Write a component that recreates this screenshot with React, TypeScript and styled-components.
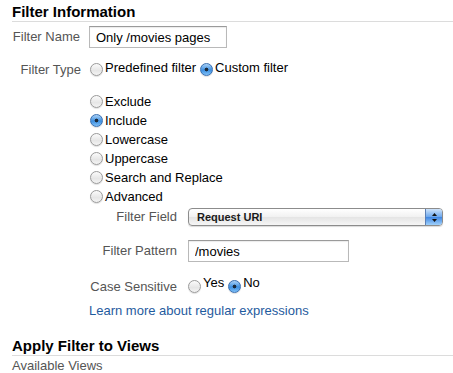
import React from "react";
import styled, { createGlobalStyle } from "styled-components";

const GlobalStyle = createGlobalStyle`
  html, body {
    margin: 0;
    padding: 0;
    background: #ffffff;
  }
  body {
    font-family: "Liberation Sans", Arial, Helvetica, sans-serif;
    font-size: 13px;
    color: #000;
  }
`;

const Page = styled.div`
  padding: 0 0 0 12px;
  width: 441px;
`;

const SectionTitle = styled.h2<{ $top?: number }>`
  margin: ${({ $top }) => $top ?? 0}px 0 0;
  padding-top: 2px;
  font-size: 15px;
  line-height: 19px;
  font-weight: bold;
  color: #000;
  border-bottom: 1px solid #dcdcdc;
`;

const FieldRow = styled.div<{ $top: number; $labelWidth: number; $gap: number }>`
  display: grid;
  grid-template-columns: ${({ $labelWidth }) => $labelWidth}px auto;
  column-gap: ${({ $gap }) => $gap}px;
  align-items: center;
  margin-top: ${({ $top }) => $top}px;
  justify-content: start;
`;

const Label = styled.span`
  text-align: right;
  color: #555;
  font-size: 13px;
  line-height: 16px;
  white-space: nowrap;
`;

const TextInput = styled.input<{ $width: number }>`
  box-sizing: border-box;
  width: ${({ $width }) => $width}px;
  height: 22px;
  padding: 1px 6px 0;
  border: 1px solid #b9b9b9;
  border-top-color: #9a9a9a;
  box-shadow: inset 0 1px 1px rgba(0, 0, 0, 0.08);
  font-family: inherit;
  font-size: 13px;
  color: #000;
  background: #fff;
  outline: none;
`;

const RadioInline = styled.div`
  display: flex;
  align-items: center;
  gap: 4px;
`;

const RadioStack = styled.div<{ $top: number }>`
  display: flex;
  flex-direction: column;
  margin: ${({ $top }) => $top}px 0 0 78px;
`;

const RadioItem = styled.label<{ $lift?: number }>`
  display: inline-flex;
  align-items: center;
  gap: 2px;
  height: 19px;
  font-size: 13px;
  color: #000;
  white-space: nowrap;

  span:last-child {
    position: relative;
    top: ${({ $lift }) => -($lift ?? 0)}px;
  }
`;

const RadioDot = styled.span<{ $checked?: boolean }>`
  box-sizing: border-box;
  display: inline-block;
  width: 13px;
  height: 13px;
  border-radius: 50%;
  flex: none;
  border: 1px solid ${({ $checked }) => ($checked ? "#3a6fb0" : "#9a9a9a")};
  background: ${({ $checked }) =>
    $checked
      ? "radial-gradient(circle at 50% 50%, #1c2a3a 0, #1c2a3a 1.6px, transparent 2.2px), linear-gradient(#a9d1f7, #3d8fe0 55%, #7fc0f8)"
      : "linear-gradient(#fbfbfb, #e6e6e6 60%, #f4f4f4)"};
  box-shadow: 0 1px 1px rgba(0, 0, 0, 0.12);
`;

const Radio = ({
  label,
  checked,
  lift,
}: {
  label: string;
  checked?: boolean;
  lift?: number;
}) => (
  <RadioItem $lift={lift}>
    <RadioDot $checked={checked} />
    <span>{label}</span>
  </RadioItem>
);

const SubForm = styled.div`
  margin-left: 77px;
`;

const SelectBox = styled.div`
  box-sizing: border-box;
  display: flex;
  align-items: center;
  width: 255px;
  height: 18px;
  border: 1px solid #8c8c8c;
  border-radius: 4px;
  background: linear-gradient(#ffffff, #f1f1f1 50%, #e4e4e4 51%, #f6f6f6);
  box-shadow: 0 1px 1px rgba(0, 0, 0, 0.15);
  overflow: hidden;
`;

const SelectText = styled.span`
  flex: 1;
  padding-left: 8px;
  font-size: 11px;
  font-weight: bold;
  color: #1a1a1a;
`;

const Stepper = styled.span`
  display: flex;
  align-items: center;
  justify-content: center;
  width: 16px;
  height: 100%;
  border-left: 1px solid #5a7fb5;
  background: linear-gradient(#cfe4fb, #6aa6ec 50%, #3f86e2 51%, #9fd0fb);
`;

const LinkText = styled.a`
  display: block;
  margin-top: 7px;
  color: #1f5b9e;
  text-decoration: none;
  font-size: 13px;
  line-height: 16px;
`;

const SubNote = styled.div`
  margin-top: 2px;
  color: #555;
  font-size: 13px;
  line-height: 16px;
`;

export default function App() {
  return (
    <>
      <GlobalStyle />
      <Page>
        <SectionTitle>Filter Information</SectionTitle>

        <FieldRow $top={4} $labelWidth={68} $gap={9}>
          <Label>Filter Name</Label>
          <TextInput $width={138} value="Only /movies pages" readOnly />
        </FieldRow>

        <FieldRow $top={12} $labelWidth={69} $gap={9}>
          <Label>Filter Type</Label>
          <RadioInline>
            <Radio label="Predefined filter" lift={2} />
            <Radio label="Custom filter" checked lift={2} />
          </RadioInline>
        </FieldRow>

        <RadioStack $top={13}>
          <Radio label="Exclude" />
          <Radio label="Include" checked />
          <Radio label="Lowercase" />
          <Radio label="Uppercase" />
          <Radio label="Search and Replace" />
          <Radio label="Advanced" />
        </RadioStack>

        <SubForm>
          <FieldRow $top={2} $labelWidth={88} $gap={11}>
            <Label>Filter Field</Label>
            <SelectBox>
              <SelectText>Request URI</SelectText>
              <Stepper>
                <svg width="7" height="11" viewBox="0 0 7 11">
                  <path d="M3.5 1 L6 4 L1 4 Z" fill="#111" />
                  <path d="M3.5 10 L6 7 L1 7 Z" fill="#111" />
                </svg>
              </Stepper>
            </SelectBox>
          </FieldRow>

          <FieldRow $top={14} $labelWidth={88} $gap={11}>
            <Label>Filter Pattern</Label>
            <TextInput $width={161} value="/movies" readOnly />
          </FieldRow>

          <FieldRow $top={15} $labelWidth={88} $gap={11}>
            <Label>Case Sensitive</Label>
            <RadioInline>
              <Radio label="Yes" lift={4} />
              <Radio label="No" checked lift={4} />
            </RadioInline>
          </FieldRow>

          <LinkText href="#">Learn more about regular expressions</LinkText>
        </SubForm>

        <SectionTitle $top={15}>Apply Filter to Views</SectionTitle>
        <SubNote>Available Views</SubNote>
      </Page>
    </>
  );
}
